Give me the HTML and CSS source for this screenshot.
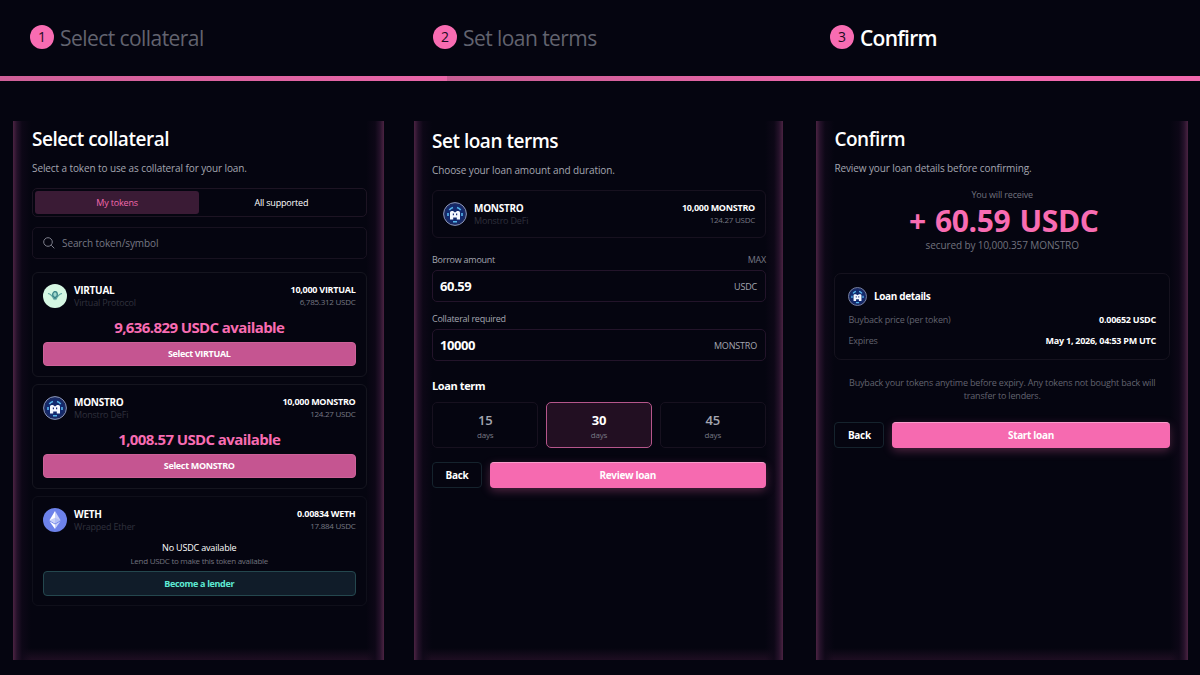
FILE: index.html
```html
<!DOCTYPE html>
<html lang="en">
<head>
    <meta charset="UTF-8">
    <meta name="viewport" content="width=device-width, initial-scale=1.0">
    <title>Borrow</title>
    <link rel="stylesheet" href="styles.css">
</head>
<body>
    <!-- Shared token logos -->
    <svg class="sprite" width="0" height="0">
        <symbol id="logo-monstro" viewBox="0 0 24 24">
            <circle cx="12" cy="12" r="11.4" fill="#1a2a63" stroke="#8d97b8" stroke-width="1"/>
            <circle cx="12" cy="12" r="9" fill="#12296e"/>
            <path d="M6.3 8Q8 6 10 5.4M17.7 8Q16 6 14 5.4M5 11v3M19 11v3M10 19.7h4" stroke="#55b5ea" stroke-width="1.6" fill="none"/>
            <path d="M7 17.6V10.6Q7 9 8.6 9H10L12 10.4L14 9H15.4Q17 9 17 10.6V17.6H13.8V15.4H10.2V17.6z" fill="#f4f7ff"/>
            <path d="M9.8 11.6h1.2v1.6h-1.2zM13 11.6h1.2v1.6H13z" fill="#1c2f78"/>
        </symbol>
        <symbol id="logo-virtual" viewBox="0 0 24 24">
            <circle cx="12" cy="12" r="12" fill="#d5f7e3"/>
            <path d="M5 9.5Q8.5 10 11 15.5M19 9.5Q15.5 10 13 15.5" fill="none" stroke="#5fa5a2" stroke-width="1.1"/>
            <ellipse cx="12" cy="10.5" rx="2.3" ry="2.8" fill="#9fd6cc" stroke="#2f7d82" stroke-width="1.2"/>
            <path d="M10.8 13.5h2.4L12 16.5z" fill="#2f7d82"/>
        </symbol>
        <symbol id="logo-eth" viewBox="0 0 24 24">
            <circle cx="12" cy="12" r="12" fill="#6d82ea"/>
            <path d="M12 3l-5.5 9.2L12 15.4z" fill="#fff"/>
            <path d="M12 3l5.5 9.2L12 15.4z" fill="#c9d1f8"/>
            <path d="M12 9.7l-5.5 2.5L12 15.4l5.5-3.2z" fill="#a5b2f3" opacity=".6"/>
            <path d="M6.5 13.3L12 21v-4.5z" fill="#fff"/>
            <path d="M17.5 13.3L12 21v-4.5z" fill="#c9d1f8"/>
        </symbol>
    </svg>

    <!-- Step headings -->
    <header class="steps">
        <div class="step"><span class="step-number">1</span><span class="step-label">Select collateral</span></div>
        <div class="step"><span class="step-number">2</span><span class="step-label">Set loan terms</span></div>
        <div class="step active"><span class="step-number">3</span><span class="step-label">Confirm</span></div>
    </header>
    <div class="progress"></div>

    <main class="panels">
        <!-- Step 1 -->
        <section class="panel collateral">
            <h2>Select collateral</h2>
            <p class="subtitle">Select a token to use as collateral for your loan.</p>

            <div class="tabs">
                <div class="tab selected">My tokens</div>
                <div class="tab">All supported</div>
            </div>

            <div class="search">
                <svg width="12" height="12" viewBox="0 0 12 12" fill="none" stroke="#7d7e8b" stroke-width="1">
                    <circle cx="5" cy="5" r="4.3"/>
                    <path d="M8.2 8.2L11.3 11.3"/>
                </svg>
                <span>Search token/symbol</span>
            </div>

            <div class="token-card">
                <div class="token">
                    <svg class="logo"><use href="#logo-virtual"/></svg>
                    <div class="token-name"><b>VIRTUAL</b><span>Virtual Protocol</span></div>
                    <div class="token-value"><b>10,000 VIRTUAL</b><span>6,785.312 USDC</span></div>
                </div>
                <div class="available">9,636.829 USDC available</div>
                <div class="button select">Select VIRTUAL</div>
            </div>

            <div class="token-card">
                <div class="token">
                    <svg class="logo"><use href="#logo-monstro"/></svg>
                    <div class="token-name"><b>MONSTRO</b><span>Monstro DeFi</span></div>
                    <div class="token-value"><b>10,000 MONSTRO</b><span>124.27 USDC</span></div>
                </div>
                <div class="available">1,008.57 USDC available</div>
                <div class="button select">Select MONSTRO</div>
            </div>

            <div class="token-card dim">
                <div class="token">
                    <svg class="logo"><use href="#logo-eth"/></svg>
                    <div class="token-name"><b>WETH</b><span>Wrapped Ether</span></div>
                    <div class="token-value"><b>0.00834 WETH</b><span>17.884 USDC</span></div>
                </div>
                <div class="none">No USDC available</div>
                <div class="hint">Lend USDC to make this token available</div>
                <div class="button lend">Become a lender</div>
            </div>
        </section>

        <!-- Step 2 -->
        <section class="panel terms">
            <h2>Set loan terms</h2>
            <p class="subtitle">Choose your loan amount and duration.</p>

            <div class="token-card single">
                <div class="token">
                    <svg class="logo"><use href="#logo-monstro"/></svg>
                    <div class="token-name"><b>MONSTRO</b><span>Monstro DeFi</span></div>
                    <div class="token-value"><b>10,000 MONSTRO</b><span>124.27 USDC</span></div>
                </div>
            </div>

            <div class="field-label"><span>Borrow amount</span><span class="max">MAX</span></div>
            <div class="field"><b>60.59</b><span>USDC</span></div>
            <div class="field-label"><span>Collateral required</span></div>
            <div class="field"><b>10000</b><span>MONSTRO</span></div>

            <h3>Loan term</h3>
            <div class="options">
                <div class="option"><b>15</b><span>days</span></div>
                <div class="option selected"><b>30</b><span>days</span></div>
                <div class="option"><b>45</b><span>days</span></div>
            </div>

            <div class="actions">
                <div class="button back">Back</div>
                <div class="button primary">Review loan</div>
            </div>
        </section>

        <!-- Step 3 -->
        <section class="panel confirm">
            <h2>Confirm</h2>
            <p class="subtitle">Review your loan details before confirming.</p>

            <div class="receive">You will receive</div>
            <div class="amount">+ 60.59 USDC</div>
            <div class="secured">secured by 10,000.357 MONSTRO</div>

            <div class="details">
                <div class="details-title">
                    <svg class="logo"><use href="#logo-monstro"/></svg>
                    <span>Loan details</span>
                </div>
                <div class="details-row"><span>Buyback price (per token)</span><b>0.00652 USDC</b></div>
                <div class="details-row"><span>Expires</span><b>May 1, 2026, 04:53 PM UTC</b></div>
            </div>

            <p class="note">Buyback your tokens anytime before expiry. Any tokens not bought back will<br>transfer to lenders.</p>

            <div class="actions">
                <div class="button back">Back</div>
                <div class="button primary">Start loan</div>
            </div>
        </section>
    </main>
</body>
</html>
```
FILE: styles.css
```css
/* General styles */
* {
    box-sizing: border-box;
}

body {
    margin: 0;
    width: 1200px;
    height: 675px;
    overflow: hidden;
    background: #050510;
    color: #ffffff;
    font-family: "Open Sans", "Noto Sans", sans-serif;
    font-size: 9px;
    letter-spacing: -0.18px;
}

h2, h3, p {
    margin: 0;
}

.sprite {
    display: block;
}

/* Step headings */
.steps {
    display: grid;
    grid-template-columns: 403px 397px 1fr;
    height: 76px;
    padding-left: 30px;
}

.step {
    display: flex;
    gap: 6px;
    padding-top: 25px;
}

.step-number {
    width: 24px;
    height: 24px;
    border-radius: 50%;
    background: #f86cb2;
    color: #1b0a20;
    font-size: 14px;
    font-weight: 500;
    line-height: 24px;
    text-align: center;
}

.step-label {
    color: #62636f;
    font-size: 21px;
    line-height: 27px;
    letter-spacing: -0.56px;
}

.step.active .step-label {
    color: #ffffff;
    font-weight: 600;
    letter-spacing: -0.75px;
}

.progress {
    height: 5px;
    background:
        linear-gradient(90deg, #cf6098, #e966a8) 0 0 / 447px 5px no-repeat,
        linear-gradient(90deg, #c75d93, #f269ae 60%) 447px 0 / 753px 5px no-repeat;
}

/* Panels */
.panels {
    display: grid;
    grid-template-columns: 401px 402px 372px;
    padding: 40px 0 0 13px;
}

.panel {
    height: 539px;
    /* Glow on the left, right and bottom edges only */
    background:
        linear-gradient(90deg, #4b2342, #25122a 4px, rgba(15, 8, 24, 0.8) 9px, transparent 18px) left / 20px 100% no-repeat,
        linear-gradient(270deg, #4b2342, #25122a 4px, rgba(15, 8, 24, 0.8) 9px, transparent 18px) right / 20px 100% no-repeat,
        linear-gradient(0deg, #1e0e22, transparent) bottom / 100% 12px no-repeat;
}

.collateral {
    width: 371px;
    padding: 5px 17.5px 0 19px;
}

.terms {
    width: 369px;
    padding: 7px 17px 0 18px;
}

.confirm {
    padding: 5px 18px 0 18.4px;
}

h2 {
    font-size: 19px;
    font-weight: 600;
    line-height: 26px;
    letter-spacing: -0.48px;
}

.subtitle {
    margin-top: 8px;
    color: #a4a5b0;
    font-size: 10px;
    line-height: 16px;
    letter-spacing: -0.1px;
}

/* Tabs and search */
.tabs {
    display: flex;
    height: 29px;
    margin-top: 12px;
    padding: 2px;
    border: 1px solid #1d1423;
    border-radius: 5px;
}

.tab {
    flex: 1;
    border-radius: 3px;
    line-height: 23px;
    text-align: center;
}

.tab.selected {
    background: #3a1b35;
    color: #f26aae;
}

.search {
    display: flex;
    align-items: center;
    gap: 7px;
    height: 32px;
    margin: 10px 0 13px;
    padding-left: 10px;
    border: 1px solid #181220;
    border-radius: 5px;
    color: #777884;
    font-size: 10px;
    letter-spacing: -0.1px;
}

/* Token cards */
.token-card {
    height: 105px;
    margin-bottom: 7px;
    padding: 11px 10px 0;
    border: 1px solid #15151f;
    border-radius: 6px;
}

.token-card.dim {
    height: 110px;
    border-color: #0f0f1a;
}

.token-card.single {
    height: 48px;
    margin: 12px 0 15px;
    border-color: #17111f;
}

.token {
    display: flex;
    height: 24px;
}

.logo {
    width: 24px;
    height: 24px;
}

.token-name {
    flex: 1;
    margin-left: 7px;
}

.token b,
.token span {
    display: block;
}

.token-name b {
    font-size: 10px;
    font-weight: 700;
    line-height: 12px;
    letter-spacing: -0.27px;
}

.token-name span {
    color: #30313d;
    line-height: 13px;
}

.token-value {
    text-align: right;
}

.token-value b {
    font-size: 9px;
    font-weight: 700;
    line-height: 12px;
    letter-spacing: -0.27px;
}

.token-value span {
    color: #777884;
    font-size: 8px;
    line-height: 12px;
    letter-spacing: -0.25px;
}

.available {
    margin-top: 9px;
    margin-bottom: 5px;
    color: #f86cb2;
    font-size: 15px;
    font-weight: 700;
    line-height: 20px;
    letter-spacing: -0.6px;
    text-align: center;
}

.none {
    margin-top: 9px;
    line-height: 13px;
    text-align: center;
}

.hint {
    margin-bottom: 4px;
    color: #71727e;
    font-size: 8px;
    line-height: 13px;
    letter-spacing: -0.27px;
    text-align: center;
}

/* Buttons */
.button {
    border-radius: 4px;
    font-weight: 700;
    letter-spacing: -0.33px;
    text-align: center;
}

.select {
    height: 24px;
    background: #c55591;
    border: 1px solid #cd6299;
    line-height: 21px;
}

.lend {
    height: 25px;
    border: 1px solid #24474e;
    background: #101c29;
    color: #5eead4;
    line-height: 23px;
}

.actions {
    display: flex;
    gap: 7.5px;
}

.back {
    width: 50px;
    height: 26px;
    border: 1px solid #15232d;
    font-size: 10px;
    line-height: 24px;
}

.primary {
    flex: 1;
    height: 26px;
    background: #f66ab0;
    border-top: 1px solid #fa9dcb;
    box-shadow: 0 3px 10px rgba(246, 106, 176, 0.3);
    font-size: 10px;
    line-height: 25px;
}

/* Loan terms form */
.field-label {
    display: flex;
    justify-content: space-between;
    color: #a4a5b0;
    line-height: 13px;
    letter-spacing: -0.25px;
}

.max {
    color: #777884;
}

.field {
    display: flex;
    align-items: center;
    justify-content: space-between;
    height: 32px;
    margin: 4px 0 10px;
    padding: 0 8px 0 7px;
    border: 1px solid #23142a;
    border-radius: 5px;
}

.field b {
    font-size: 13px;
    font-weight: 700;
    letter-spacing: -0.45px;
}

.field span {
    color: #a4a5b0;
}

h3 {
    margin-top: 17px;
    font-size: 11px;
    font-weight: 700;
    line-height: 15px;
    letter-spacing: -0.4px;
}

.options {
    display: grid;
    grid-template-columns: repeat(3, 1fr);
    gap: 7.5px;
    margin: 9px 0 14px;
}

.option {
    height: 46px;
    padding-top: 9px;
    border: 1px solid #17111f;
    border-radius: 5px;
    text-align: center;
}

.option b {
    display: block;
    color: #a4a5b0;
    font-size: 13px;
    font-weight: 600;
    line-height: 17px;
}

.option span {
    display: block;
    color: #777884;
    font-size: 8px;
    line-height: 11px;
}

.option.selected {
    border-color: #b5568b;
    background: #220f22;
}

.option.selected b {
    color: #ffffff;
    font-weight: 700;
}

/* Confirmation */
.receive {
    margin-top: 12px;
    color: #71727e;
    line-height: 14px;
    text-align: center;
}

.amount {
    margin: 2px 0 1px;
    padding-left: 3px;
    color: #f86cb2;
    font-size: 30px;
    font-weight: 700;
    line-height: 34px;
    letter-spacing: -0.4px;
    text-align: center;
    word-spacing: 2px;
}

.secured {
    color: #71727e;
    font-size: 10px;
    line-height: 12px;
    letter-spacing: -0.1px;
    text-align: center;
}

.details {
    height: 87px;
    margin-top: 22px;
    padding: 12px 13px;
    border: 1px solid #15121e;
    border-radius: 7px;
}

.details-title {
    display: flex;
    align-items: center;
    gap: 6.5px;
    height: 20px;
    margin-bottom: 4px;
    font-size: 10px;
    font-weight: 700;
    letter-spacing: -0.35px;
}

.details-title .logo {
    width: 19px;
    height: 19px;
}

.details-row {
    display: flex;
    justify-content: space-between;
    line-height: 20.5px;
}

.details-row span {
    color: #62636f;
}

.details-row b {
    font-weight: 700;
    letter-spacing: -0.25px;
}

.note {
    margin: 16px 0 20px;
    color: #62636f;
    line-height: 13px;
    text-align: center;
}
```
